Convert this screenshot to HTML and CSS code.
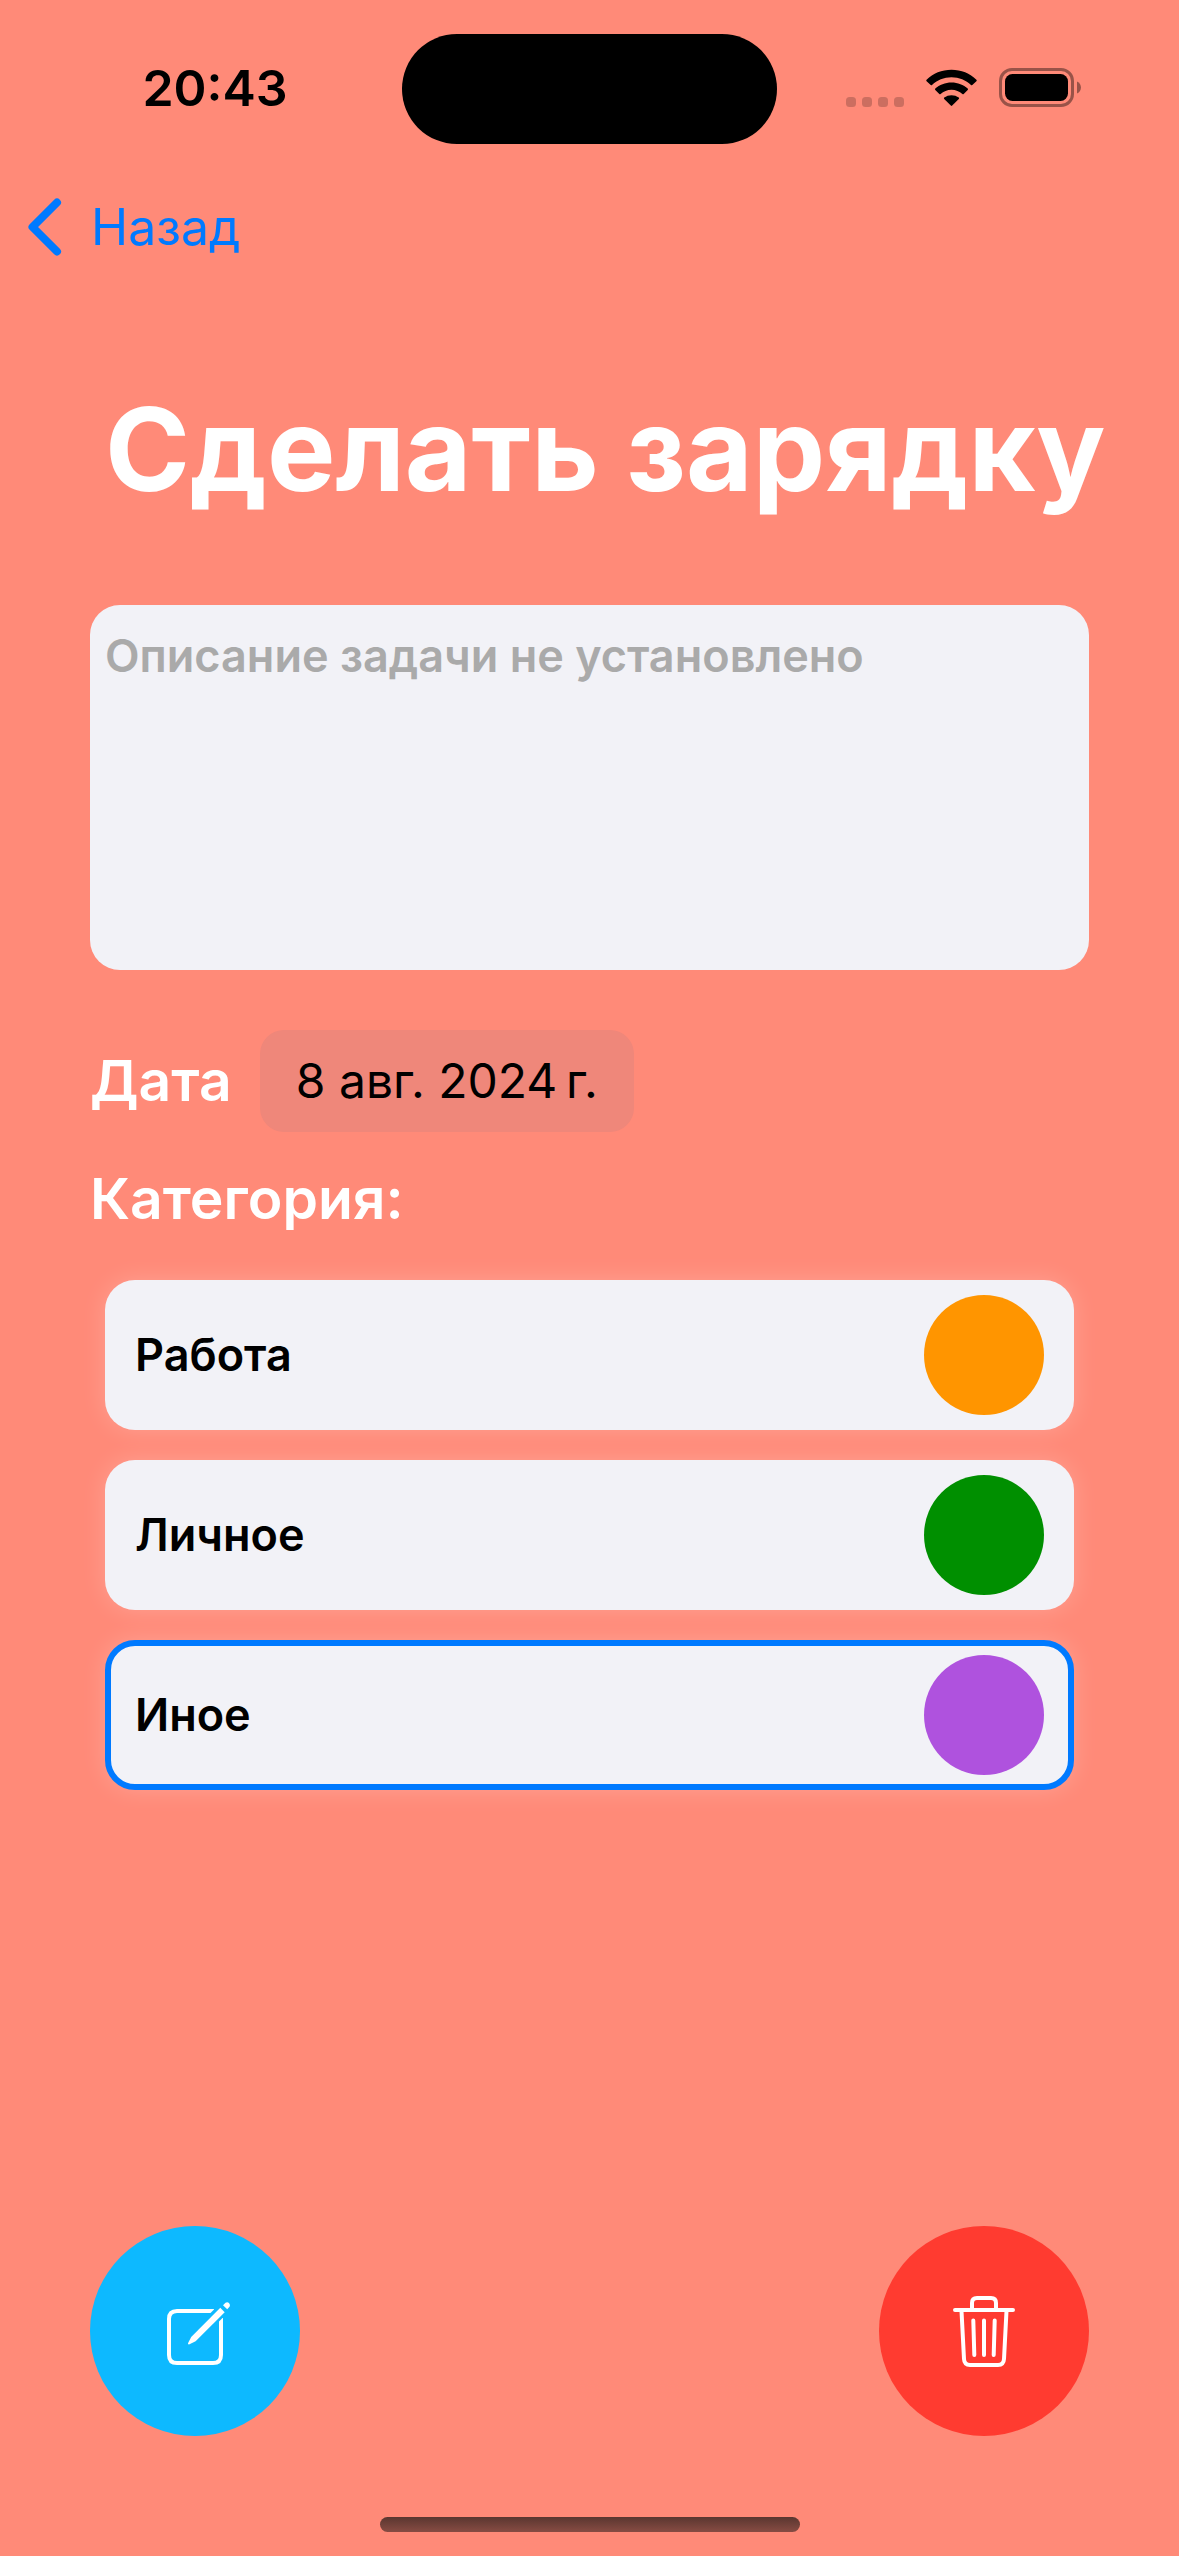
FILE: index.html
```html
<!DOCTYPE html>
<html lang="ru">
<head>
<meta charset="utf-8">
<meta name="viewport" content="width=device-width, initial-scale=1">
<title>Сделать зарядку</title>
<link rel="stylesheet" href="styles.css">
</head>
<body>
<div class="screen">
  <header class="status">
    <time class="status-time">20:43</time>
    <div class="island"></div>
    <div class="status-icons">
      <svg class="signal" viewBox="0 0 58 10" aria-hidden="true"><rect width="10" height="10" rx="3.500"/><rect x="16" width="10" height="10" rx="3.500"/><rect x="32" width="10" height="10" rx="3.500"/><rect x="48" width="10" height="10" rx="3.500"/></svg>
      <svg class="wifi" viewBox="0 0 51 38" aria-hidden="true">
        <path d="M0.6 12.2A1 1 0 0 1 0.6 10.8C7 4.4 15.800 0.800 25.500 0.800S44 4.400 50.400 10.800A1 1 0 0 1 50.400 12.200L46.300 16A1 1 0 0 1 45 16C40 11.200 33 8.200 25.500 8.200S11 11.200 6 16A1 1 0 0 1 4.700 16Z"/>
        <path d="M9.300 21A1 1 0 0 1 9.300 19.600C13.500 15.700 19.200 13.400 25.500 13.400S37.500 15.700 41.700 19.600A1 1 0 0 1 41.700 21L37.700 25A1 1 0 0 1 36.400 25C33.500 22.400 29.700 20.800 25.500 20.800S17.500 22.400 14.600 25A1 1 0 0 1 13.300 25Z"/>
        <path d="M18.200 30A1 1 0 0 1 18.200 28.600C22.300 25.300 28.700 25.300 32.800 28.600A1 1 0 0 1 32.800 30L26.200 36.600A1 1 0 0 1 24.800 36.600Z"/>
      </svg>
      <svg class="battery" viewBox="0 0 82 39" aria-hidden="true">
        <rect x="1.500" y="1.500" width="72" height="36" rx="11.500" fill="none" stroke="#000" stroke-opacity=".4" stroke-width="3"/>
        <rect x="6" y="6" width="63" height="27" rx="7.500"/>
        <path d="M78 13.500C83.300 15.500 83.300 23.500 78 25.500Z" fill-opacity=".4"/>
      </svg>
    </div>
  </header>

  <nav class="nav">
    <a class="back" href="#">
      <svg class="chevron" viewBox="0 0 34 58" aria-hidden="true"><path d="M29 4.500 4.500 29 29 53.500"/></svg>
      <span>Назад</span>
    </a>
  </nav>

  <main class="content">
    <h1 class="title">Сделать зарядку</h1>
    <textarea class="description" aria-label="Описание задачи" placeholder="Описание задачи не установлено"></textarea>
    <div class="date-row">
      <span class="label" id="date-label">Дата</span>
      <button class="date" type="button" aria-describedby="date-label">8 авг. 2024&#8239;г.</button>
    </div>
    <fieldset class="categories">
      <legend class="label">Категория:</legend>
      <label class="category"><input type="radio" name="category"><span>Работа</span><i class="dot orange"></i></label>
      <label class="category"><input type="radio" name="category"><span>Личное</span><i class="dot green"></i></label>
      <label class="category"><input type="radio" name="category" checked><span>Иное</span><i class="dot purple"></i></label>
    </fieldset>
  </main>

  <footer class="actions">
    <button class="action edit" type="button" aria-label="Редактировать">
      <svg viewBox="0 0 210 210" aria-hidden="true">
        <path class="line" d="M124 85H87Q79 85 79 93V129Q79 137 87 137H123Q131 137 131 129V92"/>
        <path class="cut" d="M104 112 136 80"/>
        <path class="solid" d="M98 117.300 101.200 111 130.300 81.800 134.700 86.200 105.600 115.300 99 118.400Q97.700 118.500 98 117.300Z"/>
        <path class="solid" d="M133 79.300 135.500 76.800Q137.200 75.500 139 77Q140.800 79 139.500 80.800L137.200 83.300Z"/>
      </svg>
    </button>
    <button class="action delete" type="button" aria-label="Удалить">
      <svg viewBox="0 0 210 210" aria-hidden="true">
        <path class="line" d="M76 84H134M93 83V77Q93 72 98 72H112Q117 72 117 77V83M82.500 85 85 133Q85.300 139 91 139H119Q124.700 139 125 133L127.500 85"/>
        <path class="line" d="M94.300 94.500 95.300 129M105 94.500V129M115.700 94.500 114.700 129"/>
      </svg>
    </button>
  </footer>
  <div class="home"></div>
</div>
</body>
</html>
```
FILE: styles.css
```css
* {
  box-sizing: border-box;
}

body {
  margin: 0;
  background: #ff8a78;
  color: #000;
  font-family: Inter, "Liberation Sans", sans-serif;
}

button,
textarea {
  border: 0;
  font: inherit;
  color: inherit;
}

.screen {
  display: flex;
  flex-direction: column;
  min-height: 100vh;
  padding-bottom: 24px;
}

/* Status bar */
.status {
  display: grid;
  grid-template-columns: 1fr 375px 1fr;
  align-items: center;
  padding-top: 34px;
}

.status-time {
  padding: 0 0 2px 28px;
  text-align: center;
  font-size: 50px;
  line-height: 60px;
  font-weight: 600;
}

.island {
  height: 110px;
  border-radius: 55px;
  background: #000;
}

.status-icons {
  display: flex;
  justify-content: flex-end;
  align-items: flex-end;
  gap: 22px;
  padding: 0 98px 4px 0;
}

.signal {
  width: 58px;
  height: 10px;
  fill-opacity: .2;
}

.wifi {
  width: 51px;
  height: 38px;
}

.battery {
  width: 82px;
  height: 39px;
}

/* Navigation */
.nav {
  padding: 53px 28px 0;
}

.back {
  display: inline-flex;
  align-items: center;
  gap: 29px;
  color: #007aff;
  font-size: 50px;
  line-height: 60px;
  text-decoration: none;
}

.chevron {
  width: 34px;
  height: 58px;
  fill: none;
  stroke: currentColor;
  stroke-width: 8px;
  stroke-linecap: round;
  stroke-linejoin: round;
}

/* Task form */
.content {
  padding: 0 90px;
}

.title {
  margin: 120px 0 0;
  padding-left: 15px;
  color: #fff;
  font-size: 115px;
  line-height: 140px;
  font-weight: 700;
  white-space: nowrap;
}

.description {
  display: block;
  width: 100%;
  height: 365px;
  margin-top: 85px;
  padding: 24px 15px;
  border-radius: 30px;
  background: #f2f2f7;
  font-size: 45px;
  line-height: 54px;
  font-weight: 600;
  resize: none;
}

.description::placeholder {
  color: #aaa;
  opacity: 1;
}

.date-row {
  display: flex;
  align-items: center;
  gap: 28px;
  margin-top: 60px;
}

.label {
  padding: 0;
  color: #fff;
  font-size: 57px;
  line-height: 74px;
  font-weight: 600;
}

.date {
  padding: 21px 36px;
  border-radius: 24px;
  background: #ef877a;
  font-size: 48px;
  line-height: 60px;
}

.categories {
  display: flex;
  flex-direction: column;
  gap: 30px;
  min-width: 0;
  margin: 30px 0 0;
  padding: 0 15px;
  border: 0;
}

.categories .label {
  margin: 0 -15px 44px;
}

.category {
  display: flex;
  align-items: center;
  justify-content: space-between;
  height: 150px;
  padding: 0 30px;
  border-radius: 30px;
  background: #f2f2f7;
  box-shadow: 0 0 24px rgba(255, 255, 255, .2);
  font-size: 45px;
  line-height: 54px;
  font-weight: 600;
}

.category input {
  position: absolute;
  opacity: 0;
}

.category:has(input:checked) {
  padding: 0 24px;
  border: 6px solid #007aff;
}

.dot {
  width: 120px;
  height: 120px;
  border-radius: 50%;
}

.orange {
  background: #ff9500;
}

.green {
  background: #008f00;
}

.purple {
  background: #af52de;
}

/* Bottom buttons */
.actions {
  display: flex;
  justify-content: space-between;
  margin-top: auto;
  padding: 0 90px;
}

.action {
  width: 210px;
  height: 210px;
  padding: 0;
  border-radius: 50%;
}

.action svg {
  display: block;
}

.edit {
  background: #0db9ff;
}

.delete {
  background: #ff3b30;
}

.line,
.cut {
  fill: none;
  stroke: #fff;
  stroke-width: 4px;
  stroke-linecap: round;
}

.edit .line {
  stroke-linecap: butt;
}

.cut {
  stroke: #0db9ff;
  stroke-width: 12px;
  stroke-linecap: butt;
}

.solid {
  fill: #fff;
}

.home {
  width: 420px;
  height: 15px;
  margin: 81px auto 0;
  border-radius: 8px;
  background: linear-gradient(#5a3630, #874c43);
}
```
